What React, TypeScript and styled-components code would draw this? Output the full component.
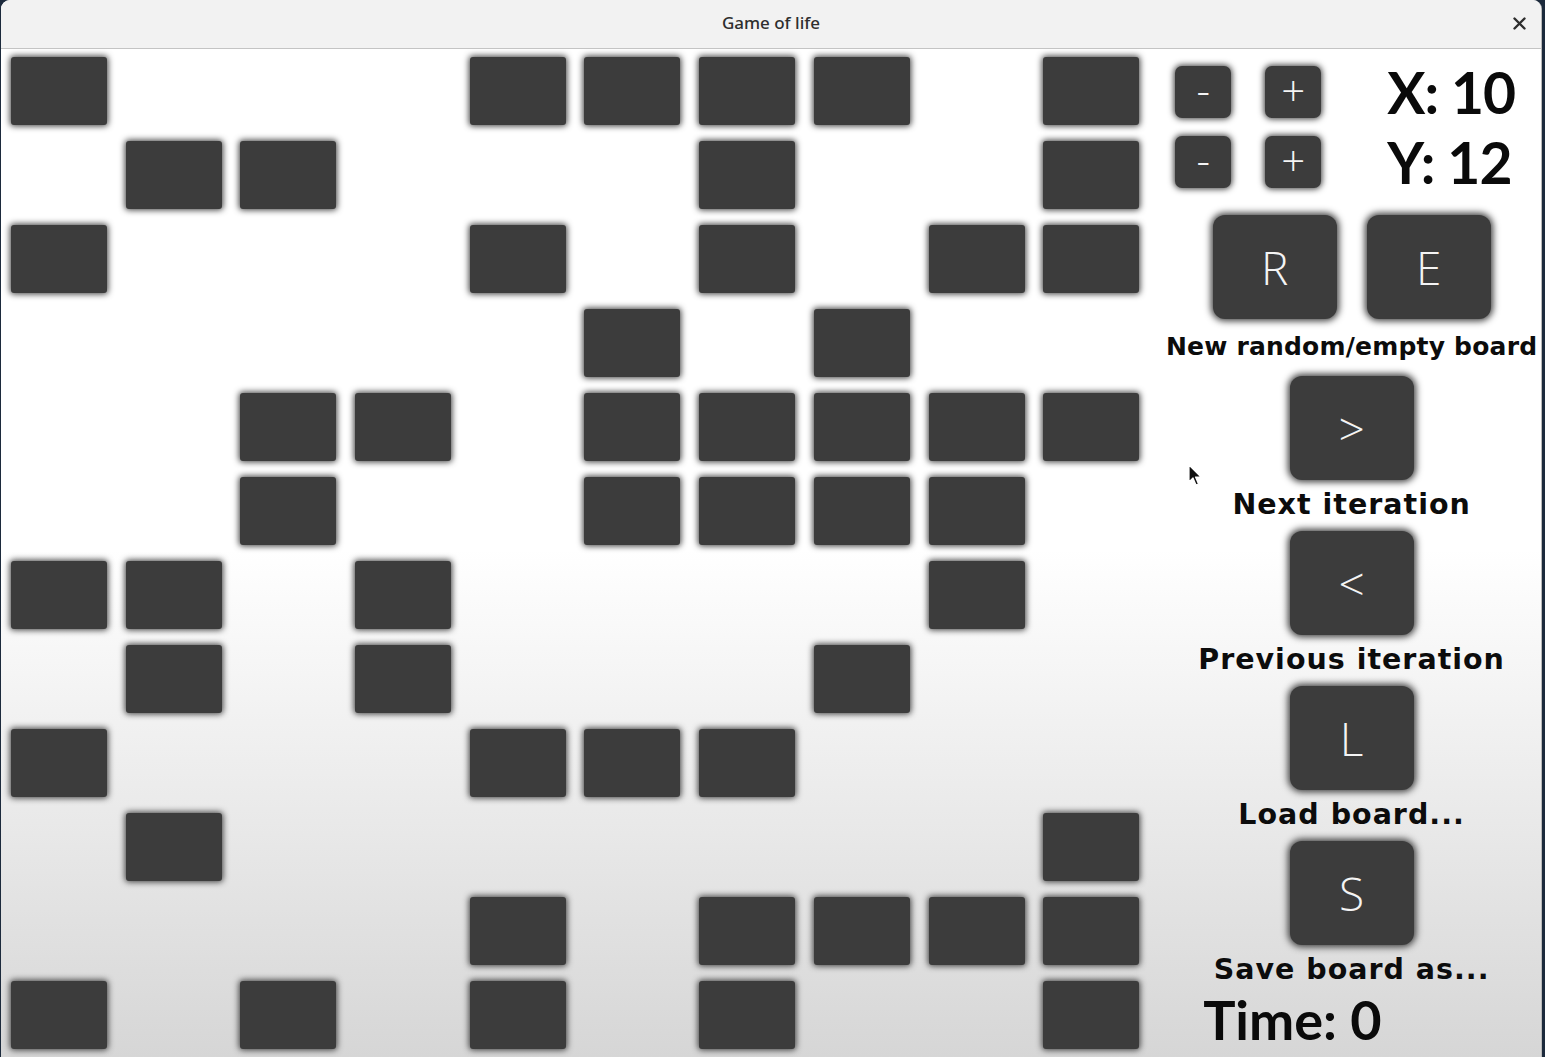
import React from 'react';
import styled, { createGlobalStyle } from 'styled-components';

const GlobalStyle = createGlobalStyle`
   html, body {
      margin: 0;
      padding: 0;
      background: #1c2a3c;
      overflow: hidden;
   }
   * {
      box-sizing: border-box;
   }
`;

const BOARD = [
   '1000111101',
   '0110001001',
   '1000101011',
   '0000010100',
   '0011011111',
   '0010011110',
   '1101000010',
   '0101000100',
   '1000111000',
   '0100000001',
   '0000101111',
   '1010101001',
];

const Window = styled.div`
   position: relative;
   margin-left: 1px;
   width: 1541px;
   height: 1057px;
   border-radius: 9px 9px 0 0;
   overflow: hidden;
   display: flex;
   flex-direction: column;
   border-right: 1px solid #b9b9b9;
   background: linear-gradient(to bottom, #ffffff 0%, #ffffff 52%, #d6d6d6 100%);
`;

const TitleBar = styled.div`
   position: relative;
   height: 49px;
   flex: 0 0 49px;
   display: flex;
   align-items: center;
   justify-content: center;
   padding-bottom: 3px;
   background: #f2f2f2;
   border-bottom: 1px solid #c4c4c4;
   font-family: "Noto Sans", "DejaVu Sans", sans-serif;
   font-weight: 500;
   font-size: 17px;
   color: #2e2e2e;
`;

const CloseButton = styled.div`
   position: absolute;
   right: 15px;
   top: 17px;
   width: 13px;
   height: 13px;
   display: flex;
`;

const Content = styled.div`
   flex: 1;
   display: flex;
`;

const Board = styled.div`
   display: grid;
   grid-template-columns: repeat(10, 96px);
   grid-template-rows: repeat(12, 68px);
   column-gap: 18.7px;
   row-gap: 16px;
   padding: 8px 0 0 10px;
`;

const Cell = styled.div<{ $alive: boolean }>`
   border-radius: 3px;
   background: ${p => (p.$alive ? '#3c3c3c' : 'transparent')};
   box-shadow: ${p => (p.$alive ? '0 0 6px 1px #3c3c3c' : 'none')};
`;

const Panel = styled.div`
   flex: 1;
   margin-left: 23px;
   padding-top: 17px;
   display: flex;
   flex-direction: column;
   align-items: center;
`;

const DimGrid = styled.div`
   align-self: flex-start;
   margin-left: 13px;
   display: grid;
   grid-template-columns: 56px 56px auto;
   grid-auto-rows: 52px;
   column-gap: 34px;
   row-gap: 18px;
   align-items: center;
`;

const SmallButton = styled.div`
   width: 56px;
   height: 52px;
   border-radius: 7px;
   background: #3c3c3c;
   box-shadow: 0 0 6px 1px #3c3c3c;
   display: flex;
   align-items: center;
   justify-content: center;
   color: #f4f4f4;
   font-family: "Open Sans", "DejaVu Sans", sans-serif;
   font-weight: 300;
   font-size: 42px;
   line-height: 1;
   padding-bottom: 4px;
`;

const DimLabel = styled.div`
   margin-left: 32px;
   font-family: Lato, "Liberation Sans", sans-serif;
   font-weight: 700;
   font-size: 57px;
   line-height: 52px;
   letter-spacing: -1px;
   color: #0a0a0a;
   white-space: nowrap;
`;

const Action = styled.div<{ $first?: boolean }>`
   display: flex;
   flex-direction: column;
   align-items: center;
   margin-top: ${p => (p.$first ? '27px' : '4px')};
`;

const ButtonRow = styled.div`
   display: flex;
   gap: 30px;
`;

const BigButton = styled.div`
   width: 124px;
   height: 104px;
   border-radius: 12px;
   background: #3c3c3c;
   box-shadow: 0 0 7px 2px #3c3c3c;
   display: flex;
   align-items: center;
   justify-content: center;
   color: #f4f4f4;
   font-family: "Open Sans", "DejaVu Sans", sans-serif;
   font-weight: 300;
   font-size: 46px;
   line-height: 1;
`;

const Label = styled.div<{ $small?: boolean }>`
   margin-top: 3px;
   height: ${p => (p.$small ? '50px' : '44px')};
   line-height: ${p => (p.$small ? '50px' : '44px')};
   font-family: "DejaVu Sans", Verdana, sans-serif;
   font-weight: 700;
   font-size: ${p => (p.$small ? '25px' : '28.5px')};
   letter-spacing: ${p => (p.$small ? '0.2px' : '1px')};
   color: #0c0c0c;
   white-space: nowrap;
`;

const Time = styled.div`
   align-self: flex-start;
   margin-left: 41px;
   margin-top: 2px;
   font-family: Lato, "Liberation Sans", sans-serif;
   font-weight: 700;
   font-size: 54px;
   line-height: 52px;
   color: #0a0a0a;
`;

const Cursor = styled.div`
   position: absolute;
   left: 1187px;
   top: 464px;
   width: 16px;
   height: 24px;
`;

const actions = [
   { keys: ['>'], label: 'Next iteration' },
   { keys: ['<'], label: 'Previous iteration' },
   { keys: ['L'], label: 'Load board...' },
   { keys: ['S'], label: 'Save board as...' },
];

export default function App() {
   const width = 10;
   const height = 12;
   const time = 0;

   return (<>
      <GlobalStyle />
      <Window>
         <TitleBar>
            Game of life
            <CloseButton>
               <svg width="13" height="13" viewBox="0 0 13 13">
                  <path d="M1.5 1.5 L11.5 11.5 M11.5 1.5 L1.5 11.5" stroke="#2e2e2e" strokeWidth="2.4" strokeLinecap="round" />
               </svg>
            </CloseButton>
         </TitleBar>
         <Content>
            <Board>
               {BOARD.map((row, y) => row.split('').map((c, x) => (
                  <Cell key={`${y}-${x}`} $alive={c === '1'} />
               )))}
            </Board>
            <Panel>
               <DimGrid>
                  <SmallButton>-</SmallButton>
                  <SmallButton>+</SmallButton>
                  <DimLabel>X: {width}</DimLabel>
                  <SmallButton>-</SmallButton>
                  <SmallButton>+</SmallButton>
                  <DimLabel>Y: {height}</DimLabel>
               </DimGrid>
               <Action $first>
                  <ButtonRow>
                     <BigButton>R</BigButton>
                     <BigButton>E</BigButton>
                  </ButtonRow>
                  <Label $small>New random/empty board</Label>
               </Action>
               {actions.map(a => (
                  <Action key={a.label}>
                     <ButtonRow>
                        {a.keys.map(k => <BigButton key={k}>{k}</BigButton>)}
                     </ButtonRow>
                     <Label>{a.label}</Label>
                  </Action>
               ))}
               <Time>Time: {time}</Time>
            </Panel>
         </Content>
         <Cursor>
            <svg width="16" height="24" viewBox="0 0 16 24">
               <path d="M1 1 L1 18 L5 14 L8 21 L10.5 20 L7.5 13 L13 13 Z" fill="#111" stroke="#fff" strokeWidth="1.2" strokeLinejoin="round" />
            </svg>
         </Cursor>
      </Window>
   </>);
}
